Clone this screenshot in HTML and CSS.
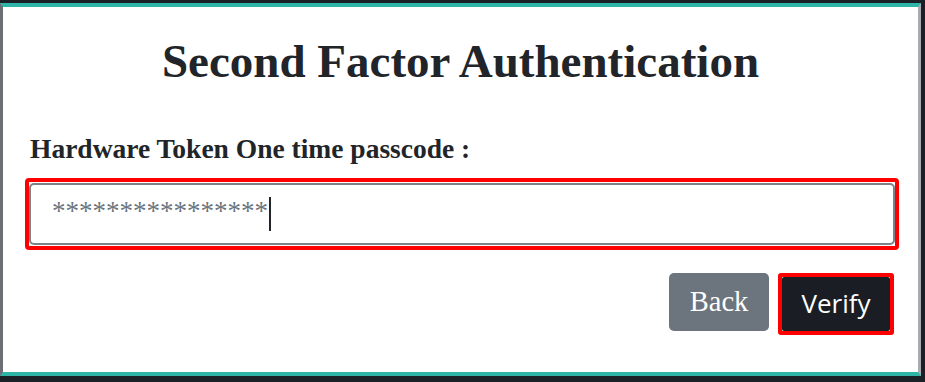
FILE: index.html
```html
<!DOCTYPE html>
<html>
<head>
<meta charset="utf-8">
<link rel="stylesheet" href="styles.css">
</head>
<body>
<div class="frame">
  <div class="card">
    <h1 class="title">Second Factor Authentication</h1>
    <div class="label">Hardware Token One time passcode :</div>
    <div class="field-outline">
      <div class="field"><span class="dots">****************</span><span class="caret"></span></div>
    </div>
    <div class="actions">
      <button class="btn btn-back">Back</button>
      <div class="btn-outline"><button class="btn btn-verify">Verify</button></div>
    </div>
  </div>
</div>
</body>
</html>
```
FILE: styles.css
```css
html, body {
  margin: 0;
  padding: 0;
  background: #1b1f26;
}
body {
  width: 925px;
  height: 382px;
  overflow: hidden;
}
.frame {
  padding: 3px 4px 6px 0;
  height: 382px;
  box-sizing: border-box;
}
.card {
  height: 100%;
  box-sizing: border-box;
  background: #ffffff;
  border-top: 4px solid #2fb5a7;
  border-bottom: 4px solid #2fb5a7;
  border-left: 3px solid #6b6f75;
  border-right: 3px solid #a8acb0;
  padding: 0 0 0 22px;
  display: flex;
  flex-direction: column;
}
.title {
  margin: 27px 0 0 0;
  font-family: "Liberation Serif", serif;
  font-weight: bold;
  font-size: 47px;
  line-height: 54px;
  color: #212529;
  text-align: center;
  padding-right: 22px;
}
.label {
  margin: 45px 0 0 5px;
  font-family: "Liberation Serif", serif;
  font-weight: bold;
  font-size: 27.5px;
  line-height: 32px;
  color: #212529;
}
.field-outline {
  margin-top: 13px;
  width: 874px;
  height: 72px;
  box-sizing: border-box;
  border: 4px solid #ff0000;
  border-radius: 4px;
  padding: 1px 0;
}
.field {
  height: 100%;
  box-sizing: border-box;
  border: 2px solid #7d8288;
  border-radius: 5px;
  display: flex;
  align-items: center;
  padding-left: 21px;
}
.dots {
  font-family: "Liberation Serif", serif;
  font-size: 27px;
  color: #6c757d;
  position: relative;
  top: -3px;
}
.caret {
  display: inline-block;
  width: 2px;
  height: 34px;
  background: #212529;
  margin-left: 1px;
}
.actions {
  margin-top: 23px;
  width: 874px;
  display: flex;
  justify-content: flex-end;
  align-items: flex-start;
  gap: 9px;
}
.btn {
  border: none;
  margin: 0;
  padding: 0;
  color: #ffffff;
  cursor: pointer;
}
.btn-back {
  width: 100px;
  height: 58px;
  background: #6c757d;
  border-radius: 5px;
  font-family: "Liberation Serif", serif;
  font-size: 28.5px;
}
.btn-outline {
  border: 4px solid #ff0000;
  border-radius: 3px;
  width: 116px;
  height: 62px;
  box-sizing: border-box;
  margin-right: 5px;
}
.btn-verify {
  display: block;
  width: 100%;
  height: 100%;
  background: #1a1d23;
  border-radius: 2px;
  font-family: "Open Sans", sans-serif;
  font-size: 26px;
  padding-bottom: 2px;
}
```
